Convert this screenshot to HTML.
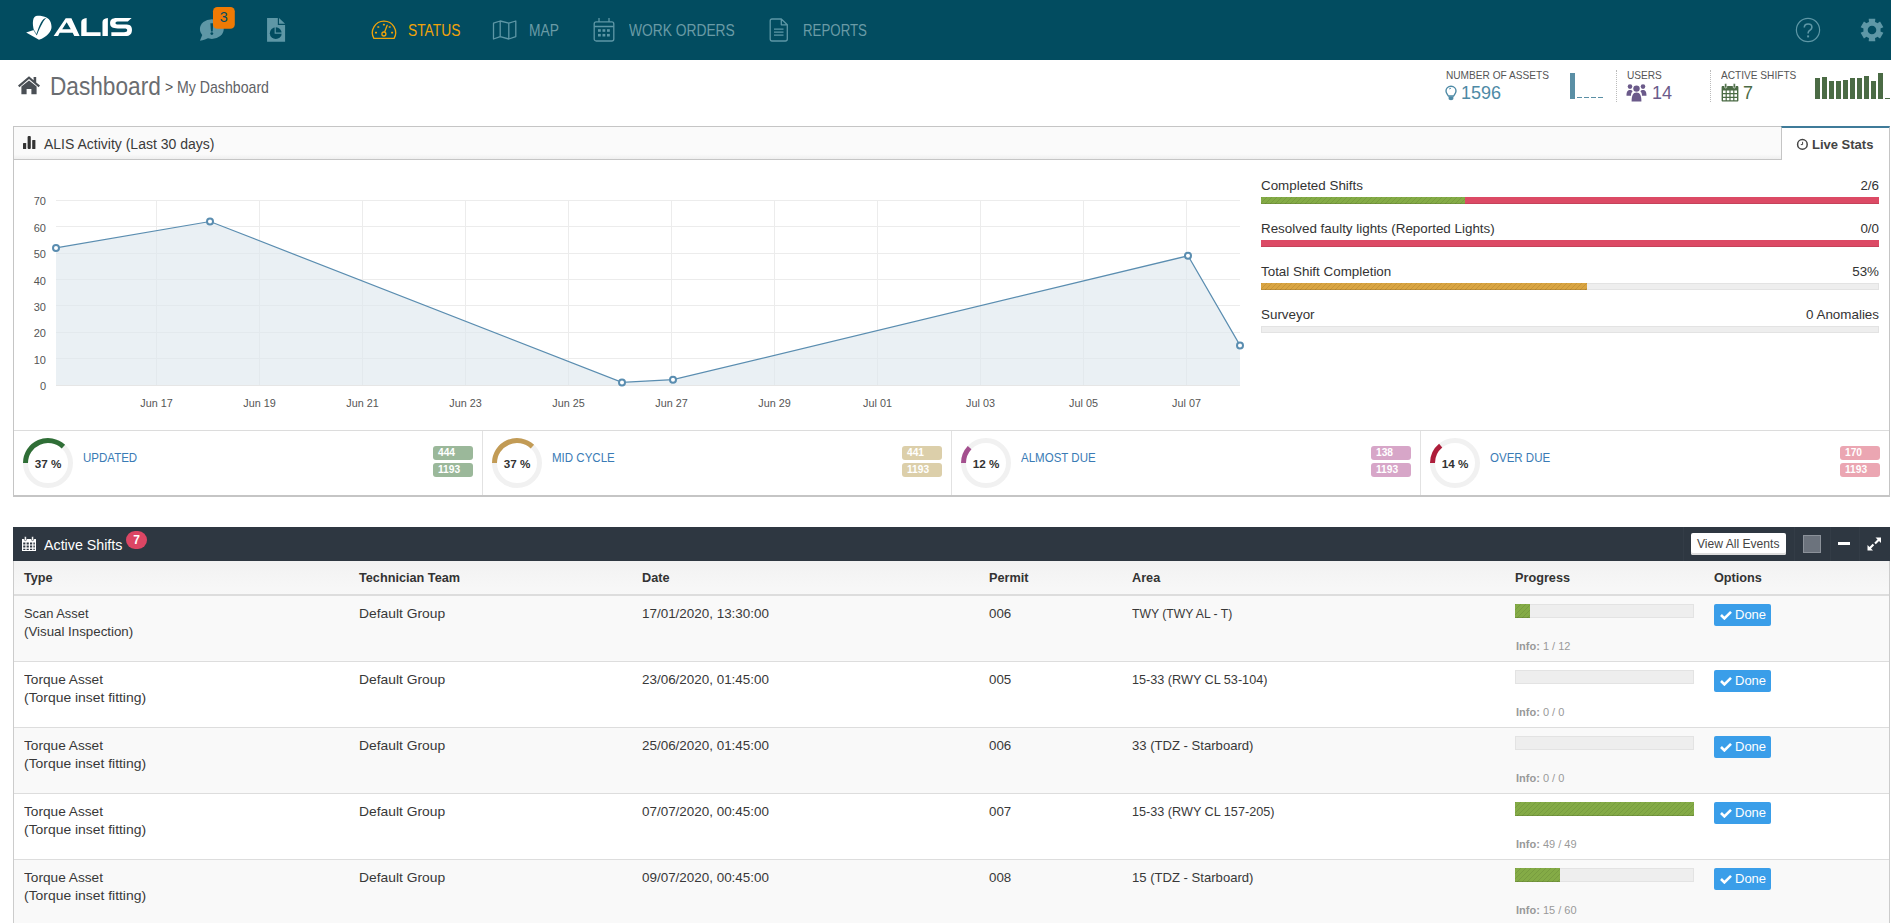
<!DOCTYPE html>
<html><head><meta charset="utf-8">
<style>
*{box-sizing:border-box;margin:0;padding:0}
html,body{width:1891px;height:923px;overflow:hidden;background:#fff;font-family:"Liberation Sans",sans-serif;color:#333}
.a{position:absolute}
.t{position:absolute;white-space:nowrap;line-height:1}
.nt{position:absolute;white-space:nowrap;line-height:1;font-size:16px;color:#6a9ba6;transform-origin:0 0}
.ylab{position:absolute;white-space:nowrap;line-height:1;font-size:11px;color:#555;text-align:right;width:30px}
.xlab{position:absolute;white-space:nowrap;line-height:1;font-size:10.8px;color:#555;text-align:center;width:60px}
.ls{position:absolute;white-space:nowrap;line-height:1;font-size:13.4px;color:#333}
.bar{position:absolute;height:7px;background:#eee;box-shadow:inset 0 0 0 1px #e3e3e3}
.td{position:absolute;white-space:nowrap;line-height:18px;font-size:13.3px;color:#383838;transform-origin:0 0}
.th{position:absolute;white-space:nowrap;line-height:1;font-size:12.7px;font-weight:bold;color:#333}
.pb{position:absolute;width:179px;height:14px;background:#eee;box-shadow:inset 0 0 0 1px #e3e3e3}
.done{position:absolute;width:57px;height:22px;background:#3a9ee9;border-radius:2px;color:#fff;font-size:13px;line-height:22px}
.info{position:absolute;white-space:nowrap;line-height:1;font-size:11px;color:#999}
.bdg{position:absolute;width:40px;height:14px;border-radius:3px;color:#fff;font-size:10.2px;font-weight:bold;line-height:14px;padding-left:5px}
.stl{position:absolute;white-space:nowrap;line-height:1;font-size:12.2px;color:#3a7bb5;transform:scaleX(0.945);transform-origin:0 0}
.pct{position:absolute;white-space:nowrap;line-height:1;font-size:11.7px;font-weight:bold;color:#333;width:50px;text-align:center}
.stripe{background-image:repeating-linear-gradient(135deg,rgba(0,0,0,.09) 0,rgba(0,0,0,.09) 0.9px,transparent 0.9px,transparent 3.54px)}
</style></head><body>

<div class="a" style="left:0;top:0;width:1891px;height:60px;background:#024c60"></div>
<svg class="a" style="left:22px;top:12px" width="34" height="32" viewBox="0 0 981 923">
<path fill="#fff" d="M120,590 L340,520 C320,420 305,330 318,250 C330,160 380,112 450,110 C540,108 640,128 705,160 C800,200 852,320 852,430 C852,560 720,720 490,802 Z"/>
<path fill="none" stroke="#024c60" stroke-width="18" d="M330,505 L418,650"/>
<path fill="#024c60" d="M405,668 L432,660 C480,540 535,420 585,330 C620,265 660,205 712,168 C650,175 600,215 548,300 C500,390 455,520 405,668 Z"/>
</svg>
<svg class="a" style="left:20px;top:10px" width="120" height="35" viewBox="0 0 1891 552">
<path fill="#fff" fill-rule="evenodd" d="M530,410 L720,130 L810,130 L940,410 L855,410 L830,360 L625,360 L600,410 Z M665,305 L735,195 L800,305 Z"/>
<path fill="#fff" d="M965,410 L965,190 C965,150 1000,130 1050,125 L1050,350 L1270,350 L1270,410 Z"/>
<path fill="#fff" d="M1300,410 L1300,190 C1300,150 1330,130 1385,125 L1385,410 Z"/>
<path fill="#fff" d="M1760,125 L1530,125 C1440,125 1420,160 1420,210 C1420,270 1460,290 1540,290 L1640,290 C1680,290 1690,300 1690,320 C1690,345 1670,350 1640,350 L1440,350 L1440,410 L1660,410 C1740,410 1765,370 1765,310 C1765,250 1730,230 1660,230 L1560,230 C1520,230 1505,220 1505,205 C1505,185 1530,180 1560,180 L1700,180 Z"/>
</svg>
<svg class="a" style="left:190px;top:0px" width="110" height="50" viewBox="0 0 1891 860">
<ellipse cx="375" cy="500" rx="205" ry="170" fill="#5e97a6"/>
<path fill="#5e97a6" d="M215,590 L170,700 C230,690 290,670 330,640 Z"/>
<path fill="#024c60" d="M350,400 L400,400 L390,540 L360,540 Z"/>
<circle cx="375" cy="578" r="24" fill="#024c60"/>
<rect x="395" y="120" width="375" height="375" rx="75" fill="#ef7a04"/>
<text x="582" y="378" font-family="Liberation Sans" font-size="250" fill="#024c60" text-anchor="middle">3</text>
<path fill="#5e97a6" d="M1325,310 L1510,310 L1510,430 L1635,430 L1635,720 L1325,720 Z"/>
<path fill="#5e97a6" d="M1530,310 L1635,410 L1530,410 Z"/>
<circle cx="1475" cy="570" r="102" fill="#024c60"/>
<path fill="none" stroke="#5e97a6" stroke-width="20" d="M1465,465 L1465,570 L1585,570"/>
</svg>
<svg class="a" style="left:368px;top:16px" width="32" height="26" viewBox="0 0 32 26">
<path d="M5.9,22.4 A11.6,11.6 0 1 1 26.1,22.4 Z" fill="none" stroke="#f0a30a" stroke-width="1.3" stroke-linejoin="round"/>
<rect x="14.9" y="7.75" width="2" height="1.7" rx="0.4" fill="#f0a30a"/><rect x="9.3" y="10.15" width="2" height="1.7" rx="0.4" fill="#f0a30a"/><rect x="20.7" y="10.15" width="2" height="1.7" rx="0.4" fill="#f0a30a"/><rect x="7" y="15.750000000000002" width="2" height="1.7" rx="0.4" fill="#f0a30a"/><rect x="23.1" y="15.750000000000002" width="2" height="1.7" rx="0.4" fill="#f0a30a"/>
<circle cx="15.9" cy="18" r="2.0" fill="none" stroke="#f0a30a" stroke-width="1.3"/>
<path d="M16.8,15.6 L19.2,9.3" stroke="#f0a30a" stroke-width="1.3" stroke-linecap="round"/>
</svg>
<div class="nt" style="left:407.5px;top:23px;color:#f0a30a;transform:scaleX(0.862)">STATUS</div>
<svg class="a" style="left:492px;top:20px" width="26" height="20" viewBox="0 0 26 20">
<path d="M1.5,3.2 L8.2,1 L16.8,3.2 L23.8,1 L23.8,16.6 L16.8,19 L8.2,16.6 L1.5,19 Z M8.2,1 L8.2,16.6 M16.8,3.2 L16.8,19" fill="none" stroke="#5e97a6" stroke-width="1.3" stroke-linejoin="round"/>
</svg>
<div class="nt" style="left:528.5px;top:23px;transform:scaleX(0.862)">MAP</div>
<svg class="a" style="left:593px;top:17px" width="22" height="25" viewBox="0 0 22 25">
<rect x="1.2" y="4.9" width="19.6" height="19.1" rx="2" fill="none" stroke="#5e97a6" stroke-width="1.3"/>
<path d="M1.2,9.5 L20.8,9.5 M6,1 L6,4.9 M16,1 L16,4.9" stroke="#5e97a6" stroke-width="1.3"/>
<rect x="5" y="12.2" width="2.8" height="2.6" fill="#5e97a6"/><rect x="9.5" y="12.2" width="2.8" height="2.6" fill="#5e97a6"/><rect x="14" y="12.2" width="2.8" height="2.6" fill="#5e97a6"/>
<rect x="5" y="16.9" width="2.8" height="2.6" fill="#5e97a6"/><rect x="9.5" y="16.9" width="2.8" height="2.6" fill="#5e97a6"/><rect x="14" y="16.9" width="2.8" height="2.6" fill="#5e97a6"/>
</svg>
<div class="nt" style="left:628.5px;top:23px;transform:scaleX(0.862)">WORK ORDERS</div>
<svg class="a" style="left:769px;top:17px" width="20" height="25" viewBox="0 0 20 25">
<path d="M3,2 L12.3,2 L18.3,7.8 L18.3,22 C18.3,23.3 17.5,24 16.3,24 L3,24 C1.8,24 1.2,23.3 1.2,22 L1.2,4 C1.2,2.7 1.8,2 3,2 Z M12.3,2 L12.3,7.8 L18.3,7.8" fill="none" stroke="#5e97a6" stroke-width="1.3" stroke-linejoin="round"/>
<path d="M5,12.2 L14.5,12.2 M5,15.2 L14.5,15.2 M5,18.2 L14.5,18.2" stroke="#5e97a6" stroke-width="1.3"/>
</svg>
<div class="nt" style="left:802.5px;top:23px;transform:scaleX(0.83)">REPORTS</div>
<svg class="a" style="left:1790px;top:12px" width="100" height="36" viewBox="0 0 100 36">
<circle cx="18" cy="18" r="11.6" fill="none" stroke="#5e97a6" stroke-width="1.2"/>
<path d="M14.3,15.6 C14.3,13.2 16,12 18.1,12 C20.3,12 21.9,13.3 21.9,15.2 C21.9,17.1 20.4,17.8 19.1,18.9 C18.4,19.5 18.1,20.2 18.1,21.6" fill="none" stroke="#5e97a6" stroke-width="1.6"/>
<rect x="17.1" y="23.4" width="2" height="2" fill="#5e97a6"/>
</svg>
<svg class="a" style="left:0;top:0" width="1891" height="60" viewBox="0 0 1891 60">
<path fill="#5e97a6" fill-rule="evenodd" d="M1867.70,22.55 L1868.97,21.95 L1868.68,18.78 L1875.32,18.78 L1875.03,21.95 L1876.30,22.55 L1876.30,22.55 L1877.46,23.35 L1880.05,21.51 L1883.38,27.27 L1880.49,28.60 L1880.60,30.00 L1880.60,30.00 L1880.49,31.40 L1883.38,32.73 L1880.05,38.49 L1877.46,36.65 L1876.30,37.45 L1876.30,37.45 L1875.03,38.05 L1875.32,41.22 L1868.68,41.22 L1868.97,38.05 L1867.70,37.45 L1867.70,37.45 L1866.54,36.65 L1863.95,38.49 L1860.62,32.73 L1863.51,31.40 L1863.40,30.00 L1863.40,30.00 L1863.51,28.60 L1860.62,27.27 L1863.95,21.51 L1866.54,23.35 L1867.70,22.55 Z M1876.3,30 A4.3,4.3 0 1 0 1867.7,30 A4.3,4.3 0 1 0 1876.3,30 Z"/>
</svg>
<svg class="a" style="left:17px;top:75px" width="24" height="20" viewBox="0 0 24 20">
<path fill="#4a4f55" d="M12,1.2 L1,10.6 L2.4,12.2 L12,4.1 L21.6,12.2 L23,10.6 L19.2,7.4 L19.2,2 L16.6,2 L16.6,5.2 Z"/>
<path fill="#4a4f55" d="M4.4,11.6 L12,5.4 L19.6,11.6 L19.6,19.2 L14.4,19.2 L14.4,14 L9.6,14 L9.6,19.2 L4.4,19.2 Z"/>
</svg>
<div class="t" style="left:50px;top:73px;font-size:26.4px;color:#6a6d71;transform:scaleX(0.858);transform-origin:0 0">Dashboard</div>
<div class="t" style="left:165px;top:80px;font-size:14px;color:#555">&gt;</div>
<div class="t" style="left:177px;top:79px;font-size:17px;color:#5f6266;transform:scaleX(0.832);transform-origin:0 0">My Dashboard</div>
<div class="t" style="left:1446px;top:70px;font-size:11px;color:#555;transform:scaleX(0.92);transform-origin:0 0">NUMBER OF ASSETS</div>
<svg class="a" style="left:1444px;top:85px" width="14" height="16" viewBox="0 0 14 16">
<path d="M7,1.2 C4,1.2 2,3.4 2,6 C2,8.2 3.6,9.4 4.4,11 L9.6,11 C10.4,9.4 12,8.2 12,6 C12,3.4 10,1.2 7,1.2 Z" fill="none" stroke="#4e8aa6" stroke-width="1.4"/>
<path d="M4.6,11.5 L9.4,11.5 L9.4,13.6 C9.4,14.6 8.4,15.3 7,15.3 C5.6,15.3 4.6,14.6 4.6,13.6 Z" fill="#4e8aa6"/>
<path d="M5,4.2 C5.5,3.6 6.2,3.3 7,3.3" fill="none" stroke="#4e8aa6" stroke-width="0.9"/>
</svg>
<div class="t" style="left:1461px;top:84px;font-size:18px;color:#4e8aa6">1596</div>
<div class="a" style="left:1570px;top:73px;width:5px;height:26px;background:#5a8fa5"></div>
<div class="a" style="left:1577px;top:97px;width:5px;height:1px;background:#5a8fa5"></div>
<div class="a" style="left:1584px;top:97px;width:5px;height:1px;background:#5a8fa5"></div>
<div class="a" style="left:1591px;top:97px;width:5px;height:1px;background:#5a8fa5"></div>
<div class="a" style="left:1598px;top:97px;width:5px;height:1px;background:#5a8fa5"></div>
<div class="a" style="left:1616px;top:70px;width:0;height:32px;border-left:1px dotted #bbb"></div>
<div class="t" style="left:1627px;top:70px;font-size:11px;color:#555;transform:scaleX(0.92);transform-origin:0 0">USERS</div>
<svg class="a" style="left:1626px;top:83px" width="21" height="19" viewBox="0 0 21 19">
<g fill="#6b5a8a"><circle cx="4" cy="3.6" r="2.3"/><circle cx="17" cy="3.6" r="2.3"/><circle cx="10.5" cy="5.6" r="3.2"/>
<path d="M0.5,12.8 C0.5,8.6 1.8,7 4,7 C5.4,7 6,7.6 6.6,8.2 C5.4,9.4 5,11 5,12.8 Z"/>
<path d="M20.5,12.8 C20.5,8.6 19.2,7 17,7 C15.6,7 15,7.6 14.4,8.2 C15.6,9.4 16,11 16,12.8 Z"/>
<path d="M5.6,18.6 C5.6,12.4 7,9.6 10.5,9.6 C14,9.6 15.4,12.4 15.4,18.6 Z"/></g>
</svg>
<div class="t" style="left:1652px;top:84px;font-size:18px;color:#6b5a8a">14</div>
<div class="a" style="left:1710px;top:70px;width:0;height:32px;border-left:1px dotted #bbb"></div>
<div class="t" style="left:1721px;top:70px;font-size:11px;color:#555;transform:scaleX(0.92);transform-origin:0 0">ACTIVE SHIFTS</div>
<svg class="a" style="left:1721px;top:83px" width="18" height="19" viewBox="0 0 18 19">
<path fill="#4b6b45" fill-rule="evenodd" d="M1.8,3 L16.2,3 C17,3 17.4,3.6 17.4,4.2 L17.4,17.4 C17.4,18 17,18.5 16.2,18.5 L1.8,18.5 C1,18.5 0.6,18 0.6,17.4 L0.6,4.2 C0.6,3.6 1,3 1.8,3 Z
M2,7.4 L2,10 L4.6,10 L4.6,7.4 Z M5.8,7.4 L5.8,10 L8.4,10 L8.4,7.4 Z M9.6,7.4 L9.6,10 L12.2,10 L12.2,7.4 Z M13.4,7.4 L13.4,10 L16,10 L16,7.4 Z
M2,11.2 L2,13.8 L4.6,13.8 L4.6,11.2 Z M5.8,11.2 L5.8,13.8 L8.4,13.8 L8.4,11.2 Z M9.6,11.2 L9.6,13.8 L12.2,13.8 L12.2,11.2 Z M13.4,11.2 L13.4,13.8 L16,13.8 L16,11.2 Z
M2,15 L2,17.2 L4.6,17.2 L4.6,15 Z M5.8,15 L5.8,17.2 L8.4,17.2 L8.4,15 Z M9.6,15 L9.6,17.2 L12.2,17.2 L12.2,15 Z M13.4,15 L13.4,17.2 L16,17.2 L16,15 Z"/>
<rect x="3.6" y="0.6" width="2.2" height="4.4" rx="1" fill="#4b6b45" stroke="#fff" stroke-width="0.6"/>
<rect x="12.2" y="0.6" width="2.2" height="4.4" rx="1" fill="#4b6b45" stroke="#fff" stroke-width="0.6"/>
</svg>
<div class="t" style="left:1743px;top:84px;font-size:18px;color:#4b6b45">7</div>
<div class="a" style="left:1815px;top:78px;width:5px;height:21px;background:#4b6b45"></div>
<div class="a" style="left:1822px;top:77px;width:5px;height:22px;background:#4b6b45"></div>
<div class="a" style="left:1829px;top:81px;width:5px;height:18px;background:#4b6b45"></div>
<div class="a" style="left:1836px;top:81px;width:5px;height:18px;background:#4b6b45"></div>
<div class="a" style="left:1843px;top:80px;width:5px;height:19px;background:#4b6b45"></div>
<div class="a" style="left:1850px;top:78px;width:5px;height:21px;background:#4b6b45"></div>
<div class="a" style="left:1857px;top:78px;width:5px;height:21px;background:#4b6b45"></div>
<div class="a" style="left:1864px;top:76px;width:5px;height:23px;background:#4b6b45"></div>
<div class="a" style="left:1871px;top:81px;width:5px;height:18px;background:#4b6b45"></div>
<div class="a" style="left:1878px;top:73px;width:5px;height:26px;background:#4b6b45"></div>
<div class="a" style="left:1885px;top:98px;width:5px;height:1px;background:#4b6b45"></div>
<div class="a" style="left:13px;top:126px;width:1877px;height:371px;border:1px solid #c5c5c5;border-bottom:2px solid #c5c5c5"></div>
<div class="a" style="left:14px;top:127px;width:1767px;height:33px;background:linear-gradient(#fafafa 0,#fafafa 85%,#efefef 100%);border-bottom:1px solid #c5c5c5"></div>
<div class="a" style="left:1781px;top:126px;width:109px;height:34px;background:#fff;border-left:1px solid #c5c5c5;border-right:1px solid #c5c5c5;border-top:2px solid #3f7b99"></div>
<svg class="a" style="left:22px;top:135px" width="15" height="15" viewBox="0 0 15 15">
<rect x="1" y="8" width="3.2" height="6" rx="0.6" fill="#333"/><rect x="5.6" y="1" width="3.2" height="13" rx="1" fill="#333"/><rect x="10.2" y="5" width="3.2" height="9" rx="0.6" fill="#333"/>
</svg>
<div class="t" style="left:44px;top:137px;font-size:14px;color:#3a3a3a">ALIS Activity (Last 30 days)</div>
<svg class="a" style="left:1796px;top:138px" width="13" height="13" viewBox="0 0 13 13">
<circle cx="6.4" cy="6.4" r="4.8" fill="none" stroke="#444" stroke-width="1.5"/><path d="M6.6,3.8 L6.6,6.6 L4.8,6.6" fill="none" stroke="#444" stroke-width="1"/>
</svg>
<div class="t" style="left:1812px;top:138px;font-size:13px;font-weight:bold;color:#444">Live Stats</div>
<svg class="a" style="left:0;top:0" width="1891" height="430" viewBox="0 0 1891 430">
<line x1="56" y1="358.5" x2="1240" y2="358.5" stroke="#ececec" stroke-width="1"/>
<line x1="56" y1="332.5" x2="1240" y2="332.5" stroke="#ececec" stroke-width="1"/>
<line x1="56" y1="305.5" x2="1240" y2="305.5" stroke="#ececec" stroke-width="1"/>
<line x1="56" y1="279.5" x2="1240" y2="279.5" stroke="#ececec" stroke-width="1"/>
<line x1="56" y1="253.5" x2="1240" y2="253.5" stroke="#ececec" stroke-width="1"/>
<line x1="56" y1="226.5" x2="1240" y2="226.5" stroke="#ececec" stroke-width="1"/>
<line x1="56" y1="200.5" x2="1240" y2="200.5" stroke="#ececec" stroke-width="1"/>
<line x1="156.5" y1="200" x2="156.5" y2="385" stroke="#ececec" stroke-width="1"/>
<line x1="259.5" y1="200" x2="259.5" y2="385" stroke="#ececec" stroke-width="1"/>
<line x1="362.5" y1="200" x2="362.5" y2="385" stroke="#ececec" stroke-width="1"/>
<line x1="465.5" y1="200" x2="465.5" y2="385" stroke="#ececec" stroke-width="1"/>
<line x1="568.5" y1="200" x2="568.5" y2="385" stroke="#ececec" stroke-width="1"/>
<line x1="671.5" y1="200" x2="671.5" y2="385" stroke="#ececec" stroke-width="1"/>
<line x1="774.5" y1="200" x2="774.5" y2="385" stroke="#ececec" stroke-width="1"/>
<line x1="877.5" y1="200" x2="877.5" y2="385" stroke="#ececec" stroke-width="1"/>
<line x1="980.5" y1="200" x2="980.5" y2="385" stroke="#ececec" stroke-width="1"/>
<line x1="1083.5" y1="200" x2="1083.5" y2="385" stroke="#ececec" stroke-width="1"/>
<line x1="1186.5" y1="200" x2="1186.5" y2="385" stroke="#ececec" stroke-width="1"/>
<line x1="56" y1="385.5" x2="1240" y2="385.5" stroke="#e6e6e6" stroke-width="1"/>
<polygon points="56,385 56,247.9 210,221.5 622,382.4 673,379.7 1188,255.8 1240,345.4 1240,385" fill="#dde6ee" fill-opacity="0.62"/>
<polyline points="56,247.9 210,221.5 622,382.4 673,379.7 1188,255.8 1240,345.4" fill="none" stroke="#5a8db0" stroke-width="1.2"/>
<circle cx="56" cy="247.9" r="3" fill="#fff" stroke="#5a8db0" stroke-width="2"/>
<circle cx="210" cy="221.5" r="3" fill="#fff" stroke="#5a8db0" stroke-width="2"/>
<circle cx="622" cy="382.4" r="3" fill="#fff" stroke="#5a8db0" stroke-width="2"/>
<circle cx="673" cy="379.7" r="3" fill="#fff" stroke="#5a8db0" stroke-width="2"/>
<circle cx="1188" cy="255.8" r="3" fill="#fff" stroke="#5a8db0" stroke-width="2"/>
<circle cx="1240" cy="345.4" r="3" fill="#fff" stroke="#5a8db0" stroke-width="2"/>
</svg>
<div class="ylab" style="left:16px;top:381.0px">0</div>
<div class="ylab" style="left:16px;top:354.6px">10</div>
<div class="ylab" style="left:16px;top:328.3px">20</div>
<div class="ylab" style="left:16px;top:301.9px">30</div>
<div class="ylab" style="left:16px;top:275.5px">40</div>
<div class="ylab" style="left:16px;top:249.2px">50</div>
<div class="ylab" style="left:16px;top:222.8px">60</div>
<div class="ylab" style="left:16px;top:196.4px">70</div>
<div class="xlab" style="left:126.5px;top:398px">Jun 17</div>
<div class="xlab" style="left:229.5px;top:398px">Jun 19</div>
<div class="xlab" style="left:332.5px;top:398px">Jun 21</div>
<div class="xlab" style="left:435.5px;top:398px">Jun 23</div>
<div class="xlab" style="left:538.5px;top:398px">Jun 25</div>
<div class="xlab" style="left:641.5px;top:398px">Jun 27</div>
<div class="xlab" style="left:744.5px;top:398px">Jun 29</div>
<div class="xlab" style="left:847.5px;top:398px">Jul 01</div>
<div class="xlab" style="left:950.5px;top:398px">Jul 03</div>
<div class="xlab" style="left:1053.5px;top:398px">Jul 05</div>
<div class="xlab" style="left:1156.5px;top:398px">Jul 07</div>
<div class="ls" style="left:1261px;top:179px">Completed Shifts</div>
<div class="ls" style="left:1579px;width:300px;text-align:right;top:179px">2/6</div>
<div class="ls" style="left:1261px;top:222px">Resolved faulty lights (Reported Lights)</div>
<div class="ls" style="left:1579px;width:300px;text-align:right;top:222px">0/0</div>
<div class="ls" style="left:1261px;top:265px">Total Shift Completion</div>
<div class="ls" style="left:1579px;width:300px;text-align:right;top:265px">53%</div>
<div class="ls" style="left:1261px;top:308px">Surveyor</div>
<div class="ls" style="left:1579px;width:300px;text-align:right;top:308px">0 Anomalies</div>
<div class="bar" style="left:1261px;top:197px;width:618px;background:#dc4a65;box-shadow:inset 0 -1px 0 rgba(0,0,0,.1)"></div>
<div class="bar stripe" style="left:1261px;top:197px;width:204px;background-color:#84ab46;box-shadow:inset 0 -1px 0 rgba(0,0,0,.12)"></div>
<div class="bar" style="left:1261px;top:240px;width:618px;background:#dc4a65;box-shadow:inset 0 -1px 0 rgba(0,0,0,.1)"></div>
<div class="bar" style="left:1261px;top:283px;width:618px"></div>
<div class="bar stripe" style="left:1261px;top:283px;width:326px;background-color:#d9a441;box-shadow:inset 0 -1px 0 rgba(0,0,0,.12)"></div>
<div class="bar" style="left:1261px;top:326px;width:618px"></div>
<div class="a" style="left:14px;top:430px;width:1875px;height:1px;background:#dcdcdc"></div>
<div class="a" style="left:482px;top:431px;width:1px;height:64px;background:#e2e2e2"></div>
<div class="a" style="left:951px;top:431px;width:1px;height:64px;background:#e2e2e2"></div>
<div class="a" style="left:1420px;top:431px;width:1px;height:64px;background:#e2e2e2"></div>
<svg class="a" style="left:0;top:0;overflow:visible" width="1" height="1">
<circle cx="48" cy="463" r="22.5" fill="none" stroke="#f1f1f1" stroke-width="5"/>
<path d="M25.5,463 A22.5,22.5 0 0 1 63.40,446.60" fill="none" stroke="#2f6e36" stroke-width="5"/>
</svg>
<div class="pct" style="left:23px;top:458px">37 %</div>
<div class="stl" style="left:82.5px;top:452px">UPDATED</div>
<div class="bdg" style="left:433px;top:446px;background:#9bb89a">444</div>
<div class="bdg" style="left:433px;top:463px;background:#9bb89a">1193</div>
<svg class="a" style="left:0;top:0;overflow:visible" width="1" height="1">
<circle cx="517" cy="463" r="22.5" fill="none" stroke="#f1f1f1" stroke-width="5"/>
<path d="M494.5,463 A22.5,22.5 0 0 1 532.40,446.60" fill="none" stroke="#c29b55" stroke-width="5"/>
</svg>
<div class="pct" style="left:492px;top:458px">37 %</div>
<div class="stl" style="left:551.5px;top:452px">MID CYCLE</div>
<div class="bdg" style="left:902px;top:446px;background:#dccfaa">441</div>
<div class="bdg" style="left:902px;top:463px;background:#dccfaa">1193</div>
<svg class="a" style="left:0;top:0;overflow:visible" width="1" height="1">
<circle cx="986" cy="463" r="22.5" fill="none" stroke="#f1f1f1" stroke-width="5"/>
<path d="M963.5,463 A22.5,22.5 0 0 1 969.60,447.60" fill="none" stroke="#a44f8e" stroke-width="5"/>
</svg>
<div class="pct" style="left:961px;top:458px">12 %</div>
<div class="stl" style="left:1020.5px;top:452px">ALMOST DUE</div>
<div class="bdg" style="left:1371px;top:446px;background:#d7a6c8">138</div>
<div class="bdg" style="left:1371px;top:463px;background:#d7a6c8">1193</div>
<svg class="a" style="left:0;top:0;overflow:visible" width="1" height="1">
<circle cx="1455" cy="463" r="22.5" fill="none" stroke="#f1f1f1" stroke-width="5"/>
<path d="M1432.5,463 A22.5,22.5 0 0 1 1440.66,445.66" fill="none" stroke="#ad1d3a" stroke-width="5"/>
</svg>
<div class="pct" style="left:1430px;top:458px">14 %</div>
<div class="stl" style="left:1489.5px;top:452px">OVER DUE</div>
<div class="bdg" style="left:1840px;top:446px;background:#eba6b2">170</div>
<div class="bdg" style="left:1840px;top:463px;background:#eba6b2">1193</div>
<div class="a" style="left:13px;top:527px;width:1877px;height:34px;background:#2e3741"></div>
<svg class="a" style="left:21px;top:536px" width="16" height="16" viewBox="0 0 16 16">
<path fill="#fff" fill-rule="evenodd" d="M1,3 L15,3 L15,15 L1,15 Z M2.2,6.4 L2.2,8.4 L4.4,8.4 L4.4,6.4 Z M5.6,6.4 L5.6,8.4 L7.8,8.4 L7.8,6.4 Z M9,6.4 L9,8.4 L11.2,8.4 L11.2,6.4 Z M12.4,6.4 L12.4,8.4 L13.8,8.4 L13.8,6.4 Z M2.2,9.6 L2.2,11.6 L4.4,11.6 L4.4,9.6 Z M5.6,9.6 L5.6,11.6 L7.8,11.6 L7.8,9.6 Z M9,9.6 L9,11.6 L11.2,11.6 L11.2,9.6 Z M12.4,9.6 L12.4,11.6 L13.8,11.6 L13.8,9.6 Z M2.2,12.8 L2.2,13.9 L4.4,13.9 L4.4,12.8 Z M5.6,12.8 L5.6,13.9 L7.8,13.9 L7.8,12.8 Z M9,12.8 L9,13.9 L11.2,13.9 L11.2,12.8 Z M12.4,12.8 L12.4,13.9 L13.8,13.9 L13.8,12.8 Z"/>
<rect x="3.4" y="0.6" width="2" height="4" rx="0.8" fill="#fff" stroke="#2d3640" stroke-width="0.6"/><rect x="10.6" y="0.6" width="2" height="4" rx="0.8" fill="#fff" stroke="#2d3640" stroke-width="0.6"/>
</svg>
<div class="t" style="left:44px;top:537px;font-size:15px;color:#fff;transform:scaleX(0.95);transform-origin:0 0">Active Shifts</div>
<div class="a" style="left:126px;top:531px;width:21px;height:18px;border-radius:9px;background:#dc4664;color:#fff;font-size:12px;font-weight:bold;text-align:center;line-height:18px">7</div>
<div class="a" style="left:1683px;top:527px;width:1px;height:34px;background:#333c46"></div>
<div class="a" style="left:1794px;top:527px;width:1px;height:34px;background:#333c46"></div>
<div class="a" style="left:1830px;top:527px;width:1px;height:34px;background:#333c46"></div>
<div class="a" style="left:1859px;top:527px;width:1px;height:34px;background:#333c46"></div>
<div class="a" style="left:1691px;top:533px;width:95px;height:22px;background:#fff;border-radius:2px;box-shadow:inset 0 -2px 0 #ddd"></div>
<div class="t" style="left:1697px;top:538px;font-size:12.1px;color:#444">View All Events</div>
<div class="a" style="left:1803px;top:535px;width:18px;height:18px;background:#6c737d;border:1px solid #8b9199"></div>
<div class="a" style="left:1838px;top:542px;width:12px;height:3px;background:#fff"></div>
<svg class="a" style="left:1866px;top:536px" width="16" height="16" viewBox="0 0 16 16">
<path fill="#fff" d="M9.5,1.5 L15,1.5 L15,7 L13,5 L9.8,8.2 L8.3,6.7 L11.5,3.5 Z M1.5,9 L3.5,11 L6.7,7.8 L8.2,9.3 L5,12.5 L7,14.5 L1.5,14.5 Z"/>
</svg>
<div class="a" style="left:13px;top:561px;width:1877px;height:362px;border-left:1px solid #ccc;border-right:1px solid #ccc"></div>
<div class="a" style="left:14px;top:561px;width:1875px;height:35px;background:linear-gradient(#f2f2f2,#f8f8f8);border-bottom:2px solid #ddd"></div>
<div class="th" style="left:24px;top:572px">Type</div>
<div class="th" style="left:359px;top:572px">Technician Team</div>
<div class="th" style="left:642px;top:572px">Date</div>
<div class="th" style="left:989px;top:572px">Permit</div>
<div class="th" style="left:1132px;top:572px">Area</div>
<div class="th" style="left:1515px;top:572px">Progress</div>
<div class="th" style="left:1714px;top:572px">Options</div>
<div class="a" style="left:14px;top:596px;width:1875px;height:66px;background:#f9f9f9;border-bottom:1px solid #ddd"></div>
<div class="td" style="left:24px;top:605px;transform:scaleX(0.97)">Scan Asset</div>
<div class="td" style="left:24px;top:623px;transform:scaleX(1.0)">(Visual Inspection)</div>
<div class="td" style="left:359px;top:605px;transform:scaleX(1.04)">Default Group</div>
<div class="td" style="left:642px;top:605px;transform:scaleX(1.01)">17/01/2020, 13:30:00</div>
<div class="td" style="left:989px;top:605px">006</div>
<div class="td" style="left:1132px;top:605px;transform:scaleX(0.915)">TWY (TWY AL - T)</div>
<div class="pb" style="left:1515px;top:604px"></div>
<div class="pb stripe" style="left:1515px;top:604px;width:15px;background-color:#84ab46;box-shadow:inset 0 -1px 0 rgba(0,0,0,.12)"></div>
<div class="done" style="left:1714px;top:604px"><svg style="position:absolute;left:6px;top:6px" width="12" height="10" viewBox="0 0 12 10"><path d="M1,5 L4.4,8.4 L11,1.8" fill="none" stroke="#fff" stroke-width="2.6"/></svg><span style="position:absolute;left:21px;top:0">Done</span></div>
<div class="info" style="left:1516px;top:641px"><b>Info:</b> 1 / 12</div>
<div class="a" style="left:14px;top:662px;width:1875px;height:66px;background:#fff;border-bottom:1px solid #ddd"></div>
<div class="td" style="left:24px;top:671px;transform:scaleX(1.027)">Torque Asset</div>
<div class="td" style="left:24px;top:689px;transform:scaleX(1.045)">(Torque inset fitting)</div>
<div class="td" style="left:359px;top:671px;transform:scaleX(1.04)">Default Group</div>
<div class="td" style="left:642px;top:671px;transform:scaleX(1.01)">23/06/2020, 01:45:00</div>
<div class="td" style="left:989px;top:671px">005</div>
<div class="td" style="left:1132px;top:671px;transform:scaleX(0.951)">15-33 (RWY CL 53-104)</div>
<div class="pb" style="left:1515px;top:670px"></div>
<div class="done" style="left:1714px;top:670px"><svg style="position:absolute;left:6px;top:6px" width="12" height="10" viewBox="0 0 12 10"><path d="M1,5 L4.4,8.4 L11,1.8" fill="none" stroke="#fff" stroke-width="2.6"/></svg><span style="position:absolute;left:21px;top:0">Done</span></div>
<div class="info" style="left:1516px;top:707px"><b>Info:</b> 0 / 0</div>
<div class="a" style="left:14px;top:728px;width:1875px;height:66px;background:#f9f9f9;border-bottom:1px solid #ddd"></div>
<div class="td" style="left:24px;top:737px;transform:scaleX(1.027)">Torque Asset</div>
<div class="td" style="left:24px;top:755px;transform:scaleX(1.045)">(Torque inset fitting)</div>
<div class="td" style="left:359px;top:737px;transform:scaleX(1.04)">Default Group</div>
<div class="td" style="left:642px;top:737px;transform:scaleX(1.01)">25/06/2020, 01:45:00</div>
<div class="td" style="left:989px;top:737px">006</div>
<div class="td" style="left:1132px;top:737px;transform:scaleX(0.984)">33 (TDZ - Starboard)</div>
<div class="pb" style="left:1515px;top:736px"></div>
<div class="done" style="left:1714px;top:736px"><svg style="position:absolute;left:6px;top:6px" width="12" height="10" viewBox="0 0 12 10"><path d="M1,5 L4.4,8.4 L11,1.8" fill="none" stroke="#fff" stroke-width="2.6"/></svg><span style="position:absolute;left:21px;top:0">Done</span></div>
<div class="info" style="left:1516px;top:773px"><b>Info:</b> 0 / 0</div>
<div class="a" style="left:14px;top:794px;width:1875px;height:66px;background:#fff;border-bottom:1px solid #ddd"></div>
<div class="td" style="left:24px;top:803px;transform:scaleX(1.027)">Torque Asset</div>
<div class="td" style="left:24px;top:821px;transform:scaleX(1.045)">(Torque inset fitting)</div>
<div class="td" style="left:359px;top:803px;transform:scaleX(1.04)">Default Group</div>
<div class="td" style="left:642px;top:803px;transform:scaleX(1.01)">07/07/2020, 00:45:00</div>
<div class="td" style="left:989px;top:803px">007</div>
<div class="td" style="left:1132px;top:803px;transform:scaleX(0.951)">15-33 (RWY CL 157-205)</div>
<div class="pb" style="left:1515px;top:802px"></div>
<div class="pb stripe" style="left:1515px;top:802px;width:179px;background-color:#84ab46;box-shadow:inset 0 -1px 0 rgba(0,0,0,.12)"></div>
<div class="done" style="left:1714px;top:802px"><svg style="position:absolute;left:6px;top:6px" width="12" height="10" viewBox="0 0 12 10"><path d="M1,5 L4.4,8.4 L11,1.8" fill="none" stroke="#fff" stroke-width="2.6"/></svg><span style="position:absolute;left:21px;top:0">Done</span></div>
<div class="info" style="left:1516px;top:839px"><b>Info:</b> 49 / 49</div>
<div class="a" style="left:14px;top:860px;width:1875px;height:66px;background:#f9f9f9;border-bottom:1px solid #ddd"></div>
<div class="td" style="left:24px;top:869px;transform:scaleX(1.027)">Torque Asset</div>
<div class="td" style="left:24px;top:887px;transform:scaleX(1.045)">(Torque inset fitting)</div>
<div class="td" style="left:359px;top:869px;transform:scaleX(1.04)">Default Group</div>
<div class="td" style="left:642px;top:869px;transform:scaleX(1.01)">09/07/2020, 00:45:00</div>
<div class="td" style="left:989px;top:869px">008</div>
<div class="td" style="left:1132px;top:869px;transform:scaleX(0.984)">15 (TDZ - Starboard)</div>
<div class="pb" style="left:1515px;top:868px"></div>
<div class="pb stripe" style="left:1515px;top:868px;width:45px;background-color:#84ab46;box-shadow:inset 0 -1px 0 rgba(0,0,0,.12)"></div>
<div class="done" style="left:1714px;top:868px"><svg style="position:absolute;left:6px;top:6px" width="12" height="10" viewBox="0 0 12 10"><path d="M1,5 L4.4,8.4 L11,1.8" fill="none" stroke="#fff" stroke-width="2.6"/></svg><span style="position:absolute;left:21px;top:0">Done</span></div>
<div class="info" style="left:1516px;top:905px"><b>Info:</b> 15 / 60</div>
</body></html>
